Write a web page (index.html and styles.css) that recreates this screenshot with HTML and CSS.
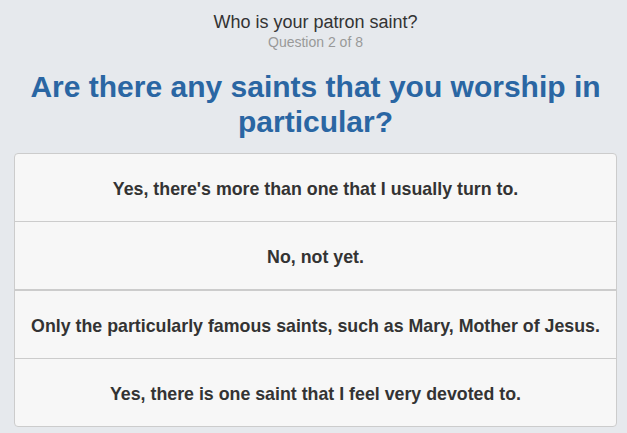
FILE: index.html
```html
<!DOCTYPE html>
<html>
<head>
<meta charset="utf-8">
<link rel="stylesheet" href="styles.css">
</head>
<body>
<div class="page">
  <header class="header">
    <div class="quiz-title">Who is your patron saint?</div>
    <div class="progress">Question 2 of 8</div>
  </header>
  <h1 class="question">Are there any saints that you worship in particular?</h1>
  <div class="answers">
    <div class="answer">Yes, there's more than one that I usually turn to.</div>
    <div class="answer">No, not yet.</div>
    <div class="answer thick">Only the particularly famous saints, such as Mary, Mother of Jesus.</div>
    <div class="answer">Yes, there is one saint that I feel very devoted to.</div>
  </div>
</div>
</body>
</html>
```
FILE: styles.css
```css
html, body {
  margin: 0;
  padding: 0;
  background: #e6e9ed;
  font-family: "Liberation Sans", Arial, sans-serif;
}
.page {
  padding: 11px 10px 0 14px;
}
.header {
  text-align: center;
}
.quiz-title {
  font-size: 18px;
  line-height: 22px;
  color: #333;
}
.progress {
  font-size: 14px;
  line-height: 18px;
  color: #999;
}
.question {
  margin: 18px 0 14px;
  text-align: center;
  font-size: 30px;
  line-height: 35px;
  font-weight: bold;
  color: #2a66a3;
}
.answers {
  border: 1px solid #ccc;
  border-radius: 4px;
  background: #f7f7f7;
  overflow: hidden;
}
.answer {
  box-sizing: border-box;
  height: 67px;
  padding-top: 3px;
  display: flex;
  align-items: center;
  justify-content: center;
  font-size: 17.8px;
  font-weight: bold;
  color: #333;
  border-top: 1px solid #ccc;
}
.answer:first-child {
  border-top: none;
}
.answer + .answer {
  height: 68px;
}
.answer.thick {
  border-top-width: 2px;
  height: 69px;
}
```
